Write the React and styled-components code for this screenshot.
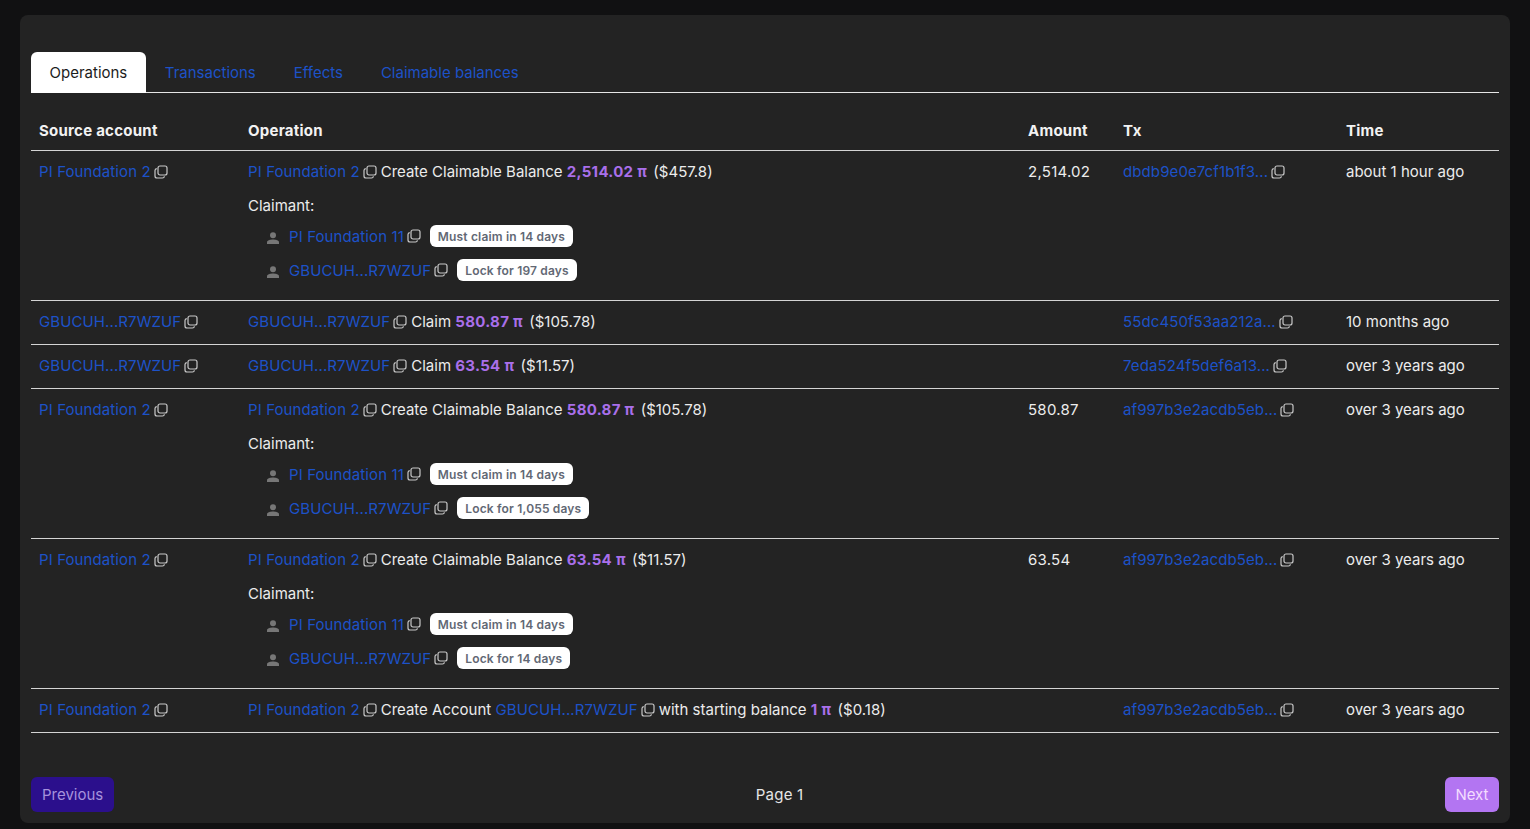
import React from "react";
import styled, { createGlobalStyle } from "styled-components";

const Global = createGlobalStyle`
  html, body { margin: 0; padding: 0; background: #111112; }
  body { font-family: Inter, "Liberation Sans", sans-serif; font-size: 15px; color: #ececec; }
`;

const Page = styled.div`
  height: 829px;
  box-sizing: border-box;
  padding: 15px 20px 6px;
  overflow: hidden;
`;

const Panel = styled.main`
  height: 808px;
  box-sizing: border-box;
  padding: 37px 11px 11px;
  background: #232323;
  border-radius: 8px;
  display: flex;
  flex-direction: column;
`;

const Tabs = styled.div`
  display: flex;
  height: 41px;
  box-sizing: border-box;
  border-bottom: 1px solid #e6e6e6;
`;

const Tab = styled.div`
  height: 41px;
  box-sizing: border-box;
  padding: 0 ${p => (p.$active ? "18.5px" : "19px")};
  display: flex;
  align-items: center;
  border-radius: 6px 6px 0 0;
  background: ${p => (p.$active ? "#fff" : "transparent")};
  color: ${p => (p.$active ? "#1c1c1c" : "#1d52c8")};
`;

const Table = styled.table`
  width: 100%;
  margin-top: 16px;
  border-collapse: collapse;
  table-layout: fixed;
`;

const Th = styled.th`
  height: 41px;
  box-sizing: border-box;
  padding: 2px 8px 0;
  text-align: left;
  font-weight: 700;
  color: #f2f2f2;
  border-bottom: 1px solid #d4d4d4;
  letter-spacing: 0.25px;
`;

const Tr = styled.tr`
  border-bottom: 1px solid #d4d4d4;
`;

const Td = styled.td`
  padding: 10.5px 8px 11.5px;
  line-height: 21px;
  vertical-align: top;
  white-space: nowrap;
  overflow: hidden;
`;

const AmountCell = styled(Td)`
  letter-spacing: 0.25px;
`;

const Link = styled.span`
  color: #1d52c8;
  letter-spacing: 0.1px;
`;

const CopySvg = styled.svg`
  width: 14px;
  height: 14px;
  margin: 0 4px 0 3px;
  vertical-align: -2px;
  color: #c9c9c9;
`;

const Pi = styled.b`
  color: #a96fea;
  font-weight: 700;
  letter-spacing: 0.3px;
  margin-right: 2px;
`;

const ClaimantTitle = styled.div`
  margin-top: 13px;
`;

const ClaimantList = styled.div`
  margin: 9px 0 0 18px;
  display: flex;
  flex-direction: column;
  gap: 12px;
  padding-bottom: 7px;
`;

const Claimant = styled.div`
  display: flex;
  align-items: center;
  height: 22px;
`;

const PersonSvg = styled.svg`
  width: 14px;
  height: 14px;
  margin: 4px 9px 0 0;
  color: #777;
`;

const Badge = styled.span`
  margin-left: 5px;
  height: 22px;
  padding: 0 8px;
  display: inline-flex;
  align-items: center;
  background: #fff;
  border-radius: 6px;
  font-size: 12px;
  font-weight: 600;
  letter-spacing: 0.17px;
  color: #626874;
`;

const Footer = styled.div`
  margin-top: auto;
  display: flex;
  align-items: center;
  justify-content: space-between;
`;

const PageButton = styled.button`
  height: 35px;
  padding: 0 ${p => (p.$primary ? "10.5px" : "11px")};
  border: 0;
  border-radius: 6px;
  font: inherit;
  background: ${p => (p.$primary ? "#b375f2" : "#2b0f8c")};
  color: ${p => (p.$primary ? "#f3dcff" : "#a692dc")};
`;

const PageLabel = styled.span`
  color: #e6e6e6;
  letter-spacing: 0.2px;
`;

const Copy = () => (
  <CopySvg viewBox="0 0 14 14" fill="none" stroke="currentColor" strokeWidth="1.2">
    <rect x="4" y="1" width="9" height="9" rx="2" />
    <path d="M2.8 3.6A2 2 0 0 0 1 5.6V11a2 2 0 0 0 2 2h5.4a2 2 0 0 0 2-1.8" />
  </CopySvg>
);

const Person = () => (
  <PersonSvg viewBox="0 0 14 14" fill="currentColor">
    <circle cx="7" cy="4.2" r="3" />
    <path d="M1 13v-1.6C1 9.4 4.4 8.6 7 8.6s6 .8 6 2.8V13z" />
  </PersonSvg>
);

const Account = ({ name }) => (
  <>
    <Link>{name}</Link>
    <Copy />
  </>
);

const PIF2 = "PI Foundation 2";
const PIF11 = "PI Foundation 11";
const GB = "GBUCUH...R7WZUF";

const Claimants = ({ lock }) => (
  <>
    <ClaimantTitle>Claimant:</ClaimantTitle>
    <ClaimantList>
      <Claimant>
        <Person />
        <Account name={PIF11} />
        <Badge>Must claim in 14 days</Badge>
      </Claimant>
      <Claimant>
        <Person />
        <Account name={GB} />
        <Badge>{lock}</Badge>
      </Claimant>
    </ClaimantList>
  </>
);

const Create = ({ pi, usd, lock }) => (
  <>
    <Account name={PIF2} />
    Create Claimable Balance <Pi>{pi} π</Pi> ({usd})
    <Claimants lock={lock} />
  </>
);

const Claim = ({ pi, usd }) => (
  <>
    <Account name={GB} />
    Claim <Pi>{pi} π</Pi> ({usd})
  </>
);

const rows = [
  { src: PIF2, op: <Create pi="2,514.02" usd="$457.8" lock="Lock for 197 days" />, amount: "2,514.02", tx: "dbdb9e0e7cf1b1f3...", time: "about 1 hour ago" },
  { src: GB, op: <Claim pi="580.87" usd="$105.78" />, tx: "55dc450f53aa212a...", time: "10 months ago" },
  { src: GB, op: <Claim pi="63.54" usd="$11.57" />, tx: "7eda524f5def6a13...", time: "over 3 years ago" },
  { src: PIF2, op: <Create pi="580.87" usd="$105.78" lock="Lock for 1,055 days" />, amount: "580.87", tx: "af997b3e2acdb5eb...", time: "over 3 years ago" },
  { src: PIF2, op: <Create pi="63.54" usd="$11.57" lock="Lock for 14 days" />, amount: "63.54", tx: "af997b3e2acdb5eb...", time: "over 3 years ago" },
  {
    src: PIF2,
    op: (
      <>
        <Account name={PIF2} />
        Create Account <Account name={GB} />
        with starting balance <Pi>1 π</Pi> ($0.18)
      </>
    ),
    tx: "af997b3e2acdb5eb...",
    time: "over 3 years ago",
  },
];

export default function App() {
  return (
    <Page>
      <Global />
      <Panel>
        <Tabs>
          <Tab $active>Operations</Tab>
          <Tab>Transactions</Tab>
          <Tab>Effects</Tab>
          <Tab>Claimable balances</Tab>
        </Tabs>
        <Table>
          <colgroup>
            <col width="209" />
            <col width="780" />
            <col width="95" />
            <col width="223" />
            <col width="161" />
          </colgroup>
          <thead>
            <tr>
              <Th>Source account</Th>
              <Th>Operation</Th>
              <Th>Amount</Th>
              <Th>Tx</Th>
              <Th>Time</Th>
            </tr>
          </thead>
          <tbody>
            {rows.map((r, i) => (
              <Tr key={i}>
                <Td><Account name={r.src} /></Td>
                <Td>{r.op}</Td>
                <AmountCell>{r.amount}</AmountCell>
                <Td><Account name={r.tx} /></Td>
                <Td>{r.time}</Td>
              </Tr>
            ))}
          </tbody>
        </Table>
        <Footer>
          <PageButton>Previous</PageButton>
          <PageLabel>Page 1</PageLabel>
          <PageButton $primary>Next</PageButton>
        </Footer>
      </Panel>
    </Page>
  );
}
